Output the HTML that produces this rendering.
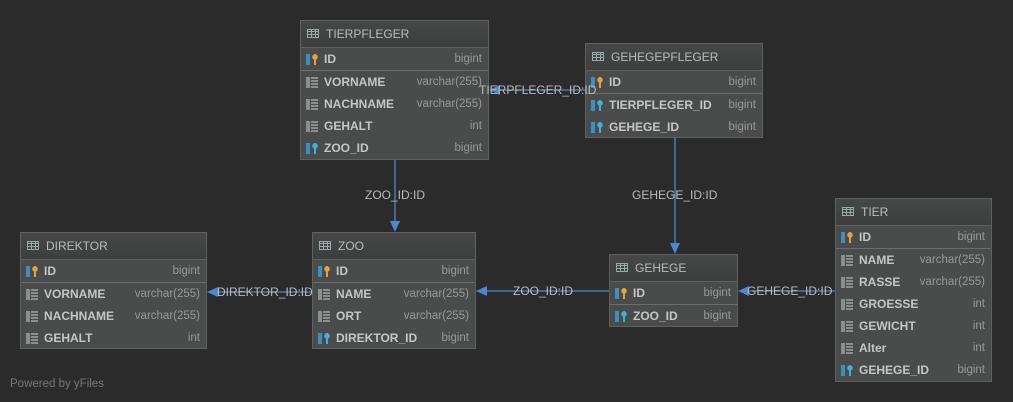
<!DOCTYPE html>
<html><head><meta charset="utf-8"><style>
body{margin:0;width:1013px;height:402px;background:#2b2b2b;position:relative;overflow:hidden;font-family:"Liberation Sans","DejaVu Sans",sans-serif}
.t{position:absolute;background:#4a4b4b;border:1px solid #5f6060;box-sizing:border-box}
.h{height:26px;background:linear-gradient(#464747,#3d3e3e);border-bottom:1px solid #5f6060;color:#bbb;font-size:12px;line-height:26px;padding-left:25px;position:relative}
.h:before{content:"";position:absolute;left:6px;top:8px;width:12px;height:9px;border:1px solid #9aa;background:repeating-linear-gradient(90deg,transparent 0 3px,#9aa 3px 4px),repeating-linear-gradient(0deg,transparent 0 2px,#9aa 2px 3px);box-sizing:border-box}
.r{height:22px;line-height:22px;font-size:12px;font-weight:bold;color:#c6c6c6;padding-left:23px;position:relative}
.r span{position:absolute;right:6px;font-weight:normal;color:#999;font-size:11.5px}
.r:before{content:"";position:absolute;left:5px;top:6px;width:4px;height:11px;background:#8a9090}
.r:after{content:"";position:absolute;left:10px;top:6px;width:7px;height:11px;background:repeating-linear-gradient(0deg,#8a9090 0 2px,transparent 2px 3px)}
.k:before{background:#3d8fbf}
.k:after{background:radial-gradient(circle at 4px 3px,#e2a33a 0 2.5px,transparent 3px),linear-gradient(90deg,transparent 3px,#e2a33a 3px 5px,transparent 5px)}
.f:before{background:#3d8fbf}
.f:after{background:radial-gradient(circle at 4px 3px,#3fb1d8 0 2.5px,transparent 3px),linear-gradient(90deg,transparent 3px,#3fb1d8 3px 5px,transparent 5px)}
.sep{border-bottom:1px solid #6b6c6c}
.l{position:absolute;color:#bbb;font-size:12px;white-space:nowrap;z-index:5}
</style></head><body>
<svg width="1013" height="402" style="position:absolute;left:0;top:0">
<g stroke="#4a88d0" stroke-width="1.3" fill="none">
<line x1="585" y1="90" x2="492" y2="90"/>
<line x1="395" y1="160" x2="395" y2="228"/>
<line x1="675" y1="138" x2="675" y2="250"/>
<line x1="312" y1="292" x2="212" y2="292"/>
<line x1="609" y1="291" x2="480" y2="291"/>
<line x1="835" y1="291" x2="742" y2="291"/>
</g>
<g fill="#4a88d0">
<polygon points="489,90 500,85 500,95"/>
<polygon points="395,232 390,221 400,221"/>
<polygon points="675,254 670,243 680,243"/>
<polygon points="207,292 218,287 218,297"/>
<polygon points="476,291 487,286 487,296"/>
<polygon points="738,291 749,286 749,296"/>
</g></svg>

<div class="t" style="left:300px;top:20px;width:189px;height:140px">
<div class="h">TIERPFLEGER</div>
<div class="r k sep">ID<span>bigint</span></div>
<div class="r">VORNAME<span>varchar(255)</span></div>
<div class="r">NACHNAME<span>varchar(255)</span></div>
<div class="r">GEHALT<span>int</span></div>
<div class="r f">ZOO_ID<span>bigint</span></div>
</div>

<div class="t" style="left:585px;top:43px;width:178px;height:95px">
<div class="h">GEHEGEPFLEGER</div>
<div class="r k sep">ID<span>bigint</span></div>
<div class="r f">TIERPFLEGER_ID<span>bigint</span></div>
<div class="r f">GEHEGE_ID<span>bigint</span></div>
</div>

<div class="t" style="left:20px;top:232px;width:187px;height:117px">
<div class="h">DIREKTOR</div>
<div class="r k sep">ID<span>bigint</span></div>
<div class="r">VORNAME<span>varchar(255)</span></div>
<div class="r">NACHNAME<span>varchar(255)</span></div>
<div class="r">GEHALT<span>int</span></div>
</div>

<div class="t" style="left:312px;top:232px;width:164px;height:117px">
<div class="h">ZOO</div>
<div class="r k sep">ID<span>bigint</span></div>
<div class="r">NAME<span>varchar(255)</span></div>
<div class="r">ORT<span>varchar(255)</span></div>
<div class="r f">DIREKTOR_ID<span>bigint</span></div>
</div>

<div class="t" style="left:609px;top:254px;width:129px;height:73px">
<div class="h">GEHEGE</div>
<div class="r k sep">ID<span>bigint</span></div>
<div class="r f">ZOO_ID<span>bigint</span></div>
</div>

<div class="t" style="left:835px;top:198px;width:157px;height:184px">
<div class="h">TIER</div>
<div class="r k sep">ID<span>bigint</span></div>
<div class="r">NAME<span>varchar(255)</span></div>
<div class="r">RASSE<span>varchar(255)</span></div>
<div class="r">GROESSE<span>int</span></div>
<div class="r">GEWICHT<span>int</span></div>
<div class="r">Alter<span>int</span></div>
<div class="r f">GEHEGE_ID<span>bigint</span></div>
</div>

<div class="l" style="left:479px;top:83px">TIERPFLEGER_ID:ID</div>
<div class="l" style="left:365px;top:188px">ZOO_ID:ID</div>
<div class="l" style="left:632px;top:188px">GEHEGE_ID:ID</div>
<div class="l" style="left:217px;top:285px">DIREKTOR_ID:ID</div>
<div class="l" style="left:513px;top:284px">ZOO_ID:ID</div>
<div class="l" style="left:747px;top:284px">GEHEGE_ID:ID</div>
<div class="l" style="left:10px;top:378px;color:#777;font-size:11.5px">Powered by yFiles</div>
</body></html>
